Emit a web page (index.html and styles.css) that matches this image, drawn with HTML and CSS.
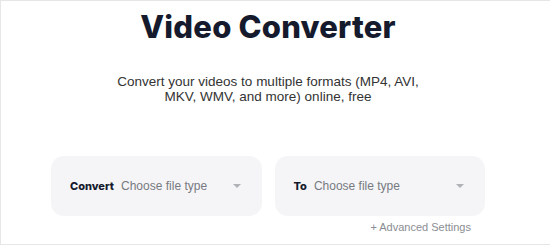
FILE: index.html
```html
<!DOCTYPE html>
<html lang="en">
<head>
    <meta charset="UTF-8">
    <meta name="viewport" content="width=device-width, initial-scale=1.0">
    <title>Video Converter</title>
    <link rel="stylesheet" href="styles.css">
</head>
<body>

    <div class="frame">
        <div class="content">
            <h1 class="title">Video Converter</h1>
            <p class="subtitle">Convert your videos to multiple formats (MP4, AVI,<br>MKV, WMV, and more) online, free</p>

            <div class="pickers">
                <div class="picker">
                    <span class="label">Convert</span>
                    <span class="choice">Choose file type</span>
                    <span class="caret"></span>
                </div>
                <div class="picker">
                    <span class="label">To</span>
                    <span class="choice">Choose file type</span>
                    <span class="caret"></span>
                </div>
            </div>

            <div class="advanced">+ Advanced Settings</div>
        </div>
    </div>

</body>
</html>
```

FILE: styles.css
```css
body {
    margin: 0;
    padding: 0;
    background-color: #fff;
    font-family: "Liberation Sans", Arial, sans-serif;
    color: #333;
}

.frame {
    height: 243px;
    border-top: 1px solid #e6e6e8;
    border-left: 1px solid #e6e6e8;
    border-bottom: 1px solid #e6e6e8;
    overflow: hidden;
}

.content {
    width: 434px;
    margin-left: 50px;
}

.title {
    margin: 6px 0 0;
    text-align: center;
    font-family: Inter, sans-serif;
    font-size: 31px;
    font-weight: 800;
    line-height: 40px;
    color: #151a2d;
    letter-spacing: 0.2px;
}

.subtitle {
    margin: 27px 0 0;
    text-align: center;
    font-size: 13.5px;
    line-height: 15px;
    color: #333;
}

.pickers {
    display: flex;
    gap: 13px;
    margin-top: 52px;
}

.picker {
    flex: 1;
    height: 60px;
    display: flex;
    align-items: center;
    padding: 0 19px;
    background-color: #f5f5f8;
    border-radius: 13px;
    font-size: 12px;
}

.label {
    font-family: Inter, sans-serif;
    font-size: 11px;
    font-weight: 800;
    color: #151a2d;
    margin-right: 7px;
}

.choice {
    flex: 1;
    color: #777a80;
}

.caret {
    width: 0;
    height: 0;
    border-left: 4px solid transparent;
    border-right: 4px solid transparent;
    border-top: 4px solid #b0b2b8;
    margin-right: 2px;
}

.advanced {
    margin-top: 5px;
    padding-right: 14px;
    text-align: right;
    font-size: 11px;
    color: #8a8d93;
}
```
